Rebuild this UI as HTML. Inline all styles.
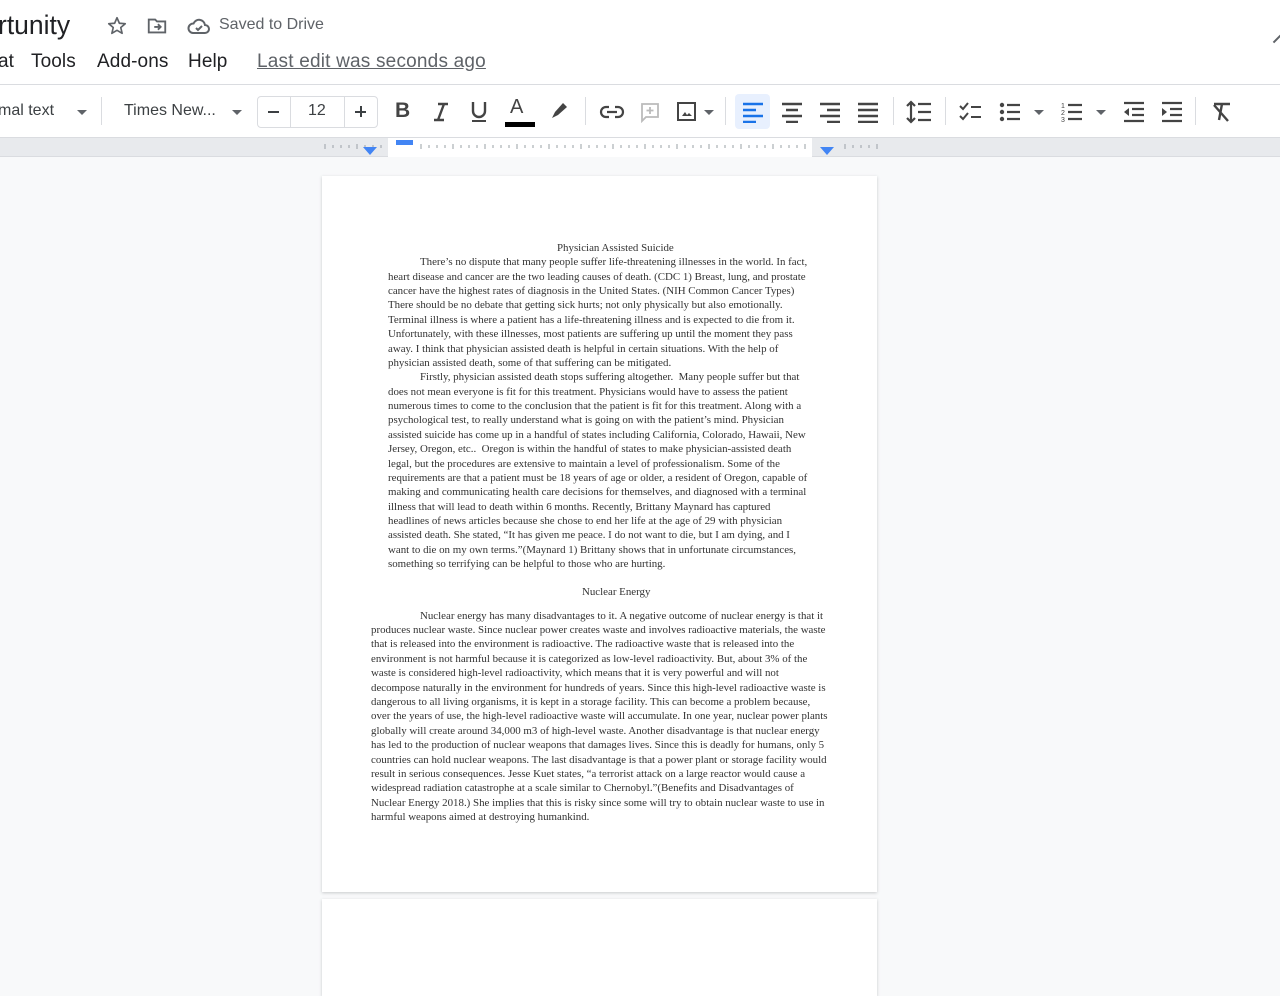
<!DOCTYPE html>
<html><head><meta charset="utf-8"><style>
*{margin:0;padding:0;box-sizing:border-box}
html,body{width:1280px;height:996px;overflow:hidden}
body{background:#f8f9fa;font-family:"Liberation Sans",Arial,sans-serif;position:relative}
.top{position:absolute;left:0;top:0;width:1280px;height:138px;background:#fff;border-bottom:1px solid #dadce0}
.abs{position:absolute;white-space:nowrap}
.menu{font-size:19px;color:#202124;top:51px;letter-spacing:.1px}
.tb{position:absolute;top:84px;left:0;width:1280px;height:54px;border-top:1px solid #dadce0}
.ruler{position:absolute;top:138px;left:0;width:1280px;height:19px;background:#e8eaed;border-bottom:1px solid #dadce0}
.page{position:absolute;left:322px;width:555px;background:#fff;box-shadow:0 1px 3px rgba(60,64,67,.25)}
.t{position:absolute;white-space:nowrap;font-family:"Liberation Serif","Times New Roman",serif;font-size:10.9px;color:#333;line-height:12px}
.sep{position:absolute;top:97px;width:1px;height:28px;background:#dadce0}
</style></head><body>
<div class="top">
<div class="abs" style="left:-2px;top:10px;font-size:26.5px;color:#202124">rtunity</div>
<svg class="abs" style="left:106px;top:15px" width="22" height="22" viewBox="0 0 24 24"><path d="M12 3l2.6 6 6.4.5-4.9 4.2 1.5 6.3L12 16.7 6.4 20l1.5-6.3L3 9.5 9.4 9z" fill="none" stroke="#5f6368" stroke-width="1.8" stroke-linejoin="round"/></svg>
<svg class="abs" style="left:146px;top:15px" width="22" height="22" viewBox="0 0 24 24"><path d="M3 5h7l2 2h9v12H3z" fill="none" stroke="#5f6368" stroke-width="2"/><path d="M9 13h6M13 10l3 3-3 3" fill="none" stroke="#5f6368" stroke-width="2"/></svg>
<svg class="abs" style="left:187px;top:15px" width="24" height="22" viewBox="0 0 24 22"><path d="M6 18h12a4 4 0 0 0 0-8 6 6 0 0 0-11.5-1.5A4.7 4.7 0 0 0 6 18z" fill="none" stroke="#5f6368" stroke-width="2"/><path d="M9 13l2 2 4-4" fill="none" stroke="#5f6368" stroke-width="2"/></svg>
<div class="abs" style="left:219px;top:16px;font-size:16px;color:#5f6368">Saved to Drive</div>
<div class="abs menu" style="left:-2px">at</div>
<div class="abs menu" style="left:31px">Tools</div>
<div class="abs menu" style="left:97px">Add-ons</div>
<div class="abs menu" style="left:188px">Help</div>
<div class="abs menu" style="left:257px;color:#5f6368;text-decoration:underline;letter-spacing:.2px">Last edit was seconds ago</div>
<div class="abs" style="left:1272px;top:38px;width:10px;height:2px;background:#5f6368;transform:rotate(-45deg)"></div>
<div class="tb">
<div class="abs" style="left:-2px;top:17px;font-size:16px;color:#3c4043">mal text</div>
<div class="abs" style="left:77px;top:25px;border:5px solid transparent;border-top-color:#5f6368"></div>
<div class="sep" style="top:12px;left:101px"></div>
<div class="abs" style="left:124px;top:17px;font-size:16px;color:#3c4043">Times New...</div>
<div class="abs" style="left:232px;top:25px;border:5px solid transparent;border-top-color:#5f6368"></div>
<div class="abs" style="left:257px;top:11px;width:121px;height:32px;border:1px solid #dadce0;border-radius:4px"></div>
<div class="abs" style="left:290px;top:11px;width:1px;height:32px;background:#dadce0"></div>
<div class="abs" style="left:344px;top:11px;width:1px;height:32px;background:#dadce0"></div>
<div class="abs" style="left:268px;top:26px;width:11px;height:2px;background:#3c4043"></div>
<div class="abs" style="left:308px;top:17px;font-size:16px;color:#3c4043">12</div>
<div class="abs" style="left:355px;top:26px;width:11px;height:2px;background:#3c4043"></div>
<div class="abs" style="left:359.5px;top:21px;width:2px;height:11px;background:#3c4043"></div>
<div class="abs" style="left:395px;top:14px;font-size:21px;font-weight:bold;color:#444">B</div>
<svg class="abs" style="left:431px;top:16px" width="20" height="22" viewBox="0 0 20 22"><path d="M7 3h10M3 19h10M13 3L7 19" fill="none" stroke="#444" stroke-width="2.4"/></svg>
<svg class="abs" style="left:469px;top:15px" width="20" height="24" viewBox="0 0 20 24"><path d="M4 2v9a6 6 0 0 0 12 0V2" fill="none" stroke="#444" stroke-width="2.4"/><path d="M3 21h14" stroke="#444" stroke-width="2"/></svg>
<div class="abs" style="left:510px;top:11px;font-size:20px;color:#444">A</div>
<div class="abs" style="left:505px;top:37px;width:30px;height:5px;background:#000"></div>
<svg class="abs" style="left:550px;top:15px" width="20" height="20" viewBox="0 0 20 20"><path d="M2 18l3-6 8-9 4 4-9 8z" fill="#444"/></svg>
<div class="sep" style="top:12px;left:585px"></div>
<svg class="abs" style="left:599px;top:17px" width="26" height="20" viewBox="0 0 26 20"><path d="M10 5H7a5 5 0 0 0 0 10h3M16 5h3a5 5 0 0 1 0 10h-3M8 10h10" fill="none" stroke="#444" stroke-width="2.2"/></svg>
<svg class="abs" style="left:639px;top:16px" width="22" height="22" viewBox="0 0 22 22"><path d="M3 3h16v13H7l-4 4z" fill="none" stroke="#bbb" stroke-width="1.8"/><path d="M11 6v7M7.5 9.5h7" stroke="#bbb" stroke-width="1.8"/></svg>
<svg class="abs" style="left:676px;top:16px" width="22" height="22" viewBox="0 0 22 22"><rect x="2" y="2" width="17" height="17" fill="none" stroke="#444" stroke-width="2"/><path d="M6 15l3-4 2 3 2-2 3 3z" fill="#444"/></svg>
<div class="abs" style="left:704px;top:25px;border:5px solid transparent;border-top-color:#5f6368"></div>
<div class="sep" style="top:12px;left:725px"></div>
<div class="abs" style="left:735px;top:9px;width:35px;height:35px;background:#e8f0fe;border-radius:4px"></div>
<svg class="abs" style="left:740px;top:16px" width="26" height="22" viewBox="0 0 26 22"><path d="M3 3h20M3 9h13M3 15h20M3 21h13" stroke="#1a73e8" stroke-width="2.4"/></svg>
<svg class="abs" style="left:779px;top:16px" width="26" height="22" viewBox="0 0 26 22"><path d="M3 3h20M7 9h12M3 15h20M7 21h12" stroke="#444" stroke-width="2.4"/></svg>
<svg class="abs" style="left:817px;top:16px" width="26" height="22" viewBox="0 0 26 22"><path d="M3 3h20M10 9h13M3 15h20M10 21h13" stroke="#444" stroke-width="2.4"/></svg>
<svg class="abs" style="left:855px;top:16px" width="26" height="22" viewBox="0 0 26 22"><path d="M3 3h20M3 9h20M3 15h20M3 21h20" stroke="#444" stroke-width="2.4"/></svg>
<div class="sep" style="top:12px;left:893px"></div>
<svg class="abs" style="left:905px;top:15px" width="28" height="24" viewBox="0 0 28 24"><path d="M6 2v20M2 6l4-4 4 4M2 18l4 4 4-4M13 4h13M13 12h13M13 20h13" fill="none" stroke="#444" stroke-width="2.2"/></svg>
<div class="sep" style="top:12px;left:945px"></div>
<svg class="abs" style="left:958px;top:16px" width="26" height="22" viewBox="0 0 26 22"><path d="M2 5l3 3 5-6M2 15l3 3 5-6M13 6h10M13 16h10" fill="none" stroke="#444" stroke-width="2"/></svg>
<svg class="abs" style="left:998px;top:16px" width="26" height="22" viewBox="0 0 26 22"><circle cx="4" cy="4" r="2.2" fill="#444"/><circle cx="4" cy="11" r="2.2" fill="#444"/><circle cx="4" cy="18" r="2.2" fill="#444"/><path d="M9 4h13M9 11h13M9 18h13" stroke="#444" stroke-width="2.2"/></svg>
<div class="abs" style="left:1034px;top:25px;border:5px solid transparent;border-top-color:#5f6368"></div>
<svg class="abs" style="left:1060px;top:16px" width="26" height="22" viewBox="0 0 26 22"><text x="1" y="7" font-size="7" fill="#444" font-family="Liberation Sans">1</text><text x="1" y="14" font-size="7" fill="#444" font-family="Liberation Sans">2</text><text x="1" y="21" font-size="7" fill="#444" font-family="Liberation Sans">3</text><path d="M8 4h14M8 11h14M8 18h14" stroke="#444" stroke-width="2.2"/></svg>
<div class="abs" style="left:1096px;top:25px;border:5px solid transparent;border-top-color:#5f6368"></div>
<svg class="abs" style="left:1122px;top:16px" width="24" height="22" viewBox="0 0 24 22"><path d="M2 2h20M10 8h12M10 14h12M2 20h20" stroke="#444" stroke-width="2.2"/><path d="M7 7l-5 4 5 4z" fill="#444"/></svg>
<svg class="abs" style="left:1160px;top:16px" width="24" height="22" viewBox="0 0 24 22"><path d="M2 2h20M10 8h12M10 14h12M2 20h20" stroke="#444" stroke-width="2.2"/><path d="M2 7l5 4-5 4z" fill="#444"/></svg>
<div class="sep" style="top:12px;left:1195px"></div>
<svg class="abs" style="left:1210px;top:16px" width="24" height="22" viewBox="0 0 24 22"><path d="M4 3h16M12 3l-3 16M4 4l14 16" fill="none" stroke="#444" stroke-width="2.4"/></svg>
</div>
</div>
<div class="ruler">
<div class="abs" style="left:388px;top:0;width:424px;height:19px;background:#fff"></div>
<svg class="abs" style="left:320px;top:0" width="560" height="19"><g stroke="#9aa0a6" stroke-width="1">
<path d="M5 6v5M13 7v3M21 7v3M29 7v3M37 6v5M45 7v3M53 7v3M61 7v3M101 6v5M109 7v3M117 7v3M125 7v3M133 6v5M141 7v3M149 7v3M157 7v3M165 6v5M173 7v3M181 7v3M189 7v3M197 6v5M205 7v3M213 7v3M221 7v3M229 6v5M237 7v3M245 7v3M253 7v3M261 6v5M269 7v3M277 7v3M285 7v3M293 6v5M301 7v3M309 7v3M317 7v3M325 6v5M333 7v3M341 7v3M349 7v3M357 6v5M365 7v3M373 7v3M381 7v3M389 6v5M397 7v3M405 7v3M413 7v3M421 6v5M429 7v3M437 7v3M445 7v3M453 6v5M461 7v3M469 7v3M477 7v3M485 6v5M525 6v5M533 7v3M541 7v3M549 7v3M557 6v5"/></g></svg>
<div class="abs" style="left:396px;top:2px;width:17px;height:5px;background:#4285f4"></div>
<div class="abs" style="left:363px;top:9px;border:7px solid transparent;border-top:8px solid #4285f4;border-bottom:0"></div>
<div class="abs" style="left:820px;top:9px;border:7px solid transparent;border-top:8px solid #4285f4;border-bottom:0"></div>
</div>
<div class="page" style="top:176px;height:716px">
<div class="t" style="left:235px;top:66px">Physician Assisted Suicide</div>
<div class="t" style="left:98px;top:80px">There’s no dispute that many people suffer life-threatening illnesses in the world. In fact,</div>
<div class="t" style="left:66px;top:95px">heart disease and cancer are the two leading causes of death. (CDC 1) Breast, lung, and prostate</div>
<div class="t" style="left:66px;top:109px">cancer have the highest rates of diagnosis in the United States. (NIH Common Cancer Types)</div>
<div class="t" style="left:66px;top:123px">There should be no debate that getting sick hurts; not only physically but also emotionally.</div>
<div class="t" style="left:66px;top:138px">Terminal illness is where a patient has a life-threatening illness and is expected to die from it.</div>
<div class="t" style="left:66px;top:152px">Unfortunately, with these illnesses, most patients are suffering up until the moment they pass</div>
<div class="t" style="left:66px;top:167px">away. I think that physician assisted death is helpful in certain situations. With the help of</div>
<div class="t" style="left:66px;top:181px">physician assisted death, some of that suffering can be mitigated.</div>
<div class="t" style="left:98px;top:195px">Firstly, physician assisted death stops suffering altogether.&nbsp; Many people suffer but that</div>
<div class="t" style="left:66px;top:210px">does not mean everyone is fit for this treatment. Physicians would have to assess the patient</div>
<div class="t" style="left:66px;top:224px">numerous times to come to the conclusion that the patient is fit for this treatment. Along with a</div>
<div class="t" style="left:66px;top:238px">psychological test, to really understand what is going on with the patient’s mind. Physician</div>
<div class="t" style="left:66px;top:253px">assisted suicide has come up in a handful of states including California, Colorado, Hawaii, New</div>
<div class="t" style="left:66px;top:267px">Jersey, Oregon, etc..&nbsp; Oregon is within the handful of states to make physician-assisted death</div>
<div class="t" style="left:66px;top:282px">legal, but the procedures are extensive to maintain a level of professionalism. Some of the</div>
<div class="t" style="left:66px;top:296px">requirements are that a patient must be 18 years of age or older, a resident of Oregon, capable of</div>
<div class="t" style="left:66px;top:310px">making and communicating health care decisions for themselves, and diagnosed with a terminal</div>
<div class="t" style="left:66px;top:325px">illness that will lead to death within 6 months. Recently, Brittany Maynard has captured</div>
<div class="t" style="left:66px;top:339px">headlines of news articles because she chose to end her life at the age of 29 with physician</div>
<div class="t" style="left:66px;top:353px">assisted death. She stated, “It has given me peace. I do not want to die, but I am dying, and I</div>
<div class="t" style="left:66px;top:368px">want to die on my own terms.”(Maynard 1) Brittany shows that in unfortunate circumstances,</div>
<div class="t" style="left:66px;top:382px">something so terrifying can be helpful to those who are hurting.</div>
<div class="t" style="left:260px;top:410px">Nuclear Energy</div>
<div class="t" style="left:98px;top:434px">Nuclear energy has many disadvantages to it. A negative outcome of nuclear energy is that it</div>
<div class="t" style="left:49px;top:448px">produces nuclear waste. Since nuclear power creates waste and involves radioactive materials, the waste</div>
<div class="t" style="left:49px;top:462px">that is released into the environment is radioactive. The radioactive waste that is released into the</div>
<div class="t" style="left:49px;top:477px">environment is not harmful because it is categorized as low-level radioactivity. But, about 3% of the</div>
<div class="t" style="left:49px;top:491px">waste is considered high-level radioactivity, which means that it is very powerful and will not</div>
<div class="t" style="left:49px;top:506px">decompose naturally in the environment for hundreds of years. Since this high-level radioactive waste is</div>
<div class="t" style="left:49px;top:520px">dangerous to all living organisms, it is kept in a storage facility. This can become a problem because,</div>
<div class="t" style="left:49px;top:534px">over the years of use, the high-level radioactive waste will accumulate. In one year, nuclear power plants</div>
<div class="t" style="left:49px;top:549px">globally will create around 34,000 m3 of high-level waste. Another disadvantage is that nuclear energy</div>
<div class="t" style="left:49px;top:563px">has led to the production of nuclear weapons that damages lives. Since this is deadly for humans, only 5</div>
<div class="t" style="left:49px;top:578px">countries can hold nuclear weapons. The last disadvantage is that a power plant or storage facility would</div>
<div class="t" style="left:49px;top:592px">result in serious consequences. Jesse Kuet states, “a terrorist attack on a large reactor would cause a</div>
<div class="t" style="left:49px;top:606px">widespread radiation catastrophe at a scale similar to Chernobyl.”(Benefits and Disadvantages of</div>
<div class="t" style="left:49px;top:621px">Nuclear Energy 2018.) She implies that this is risky since some will try to obtain nuclear waste to use in</div>
<div class="t" style="left:49px;top:635px">harmful weapons aimed at destroying humankind.</div>
</div>
<div class="page" style="top:899px;height:97px"></div>
</body></html>
